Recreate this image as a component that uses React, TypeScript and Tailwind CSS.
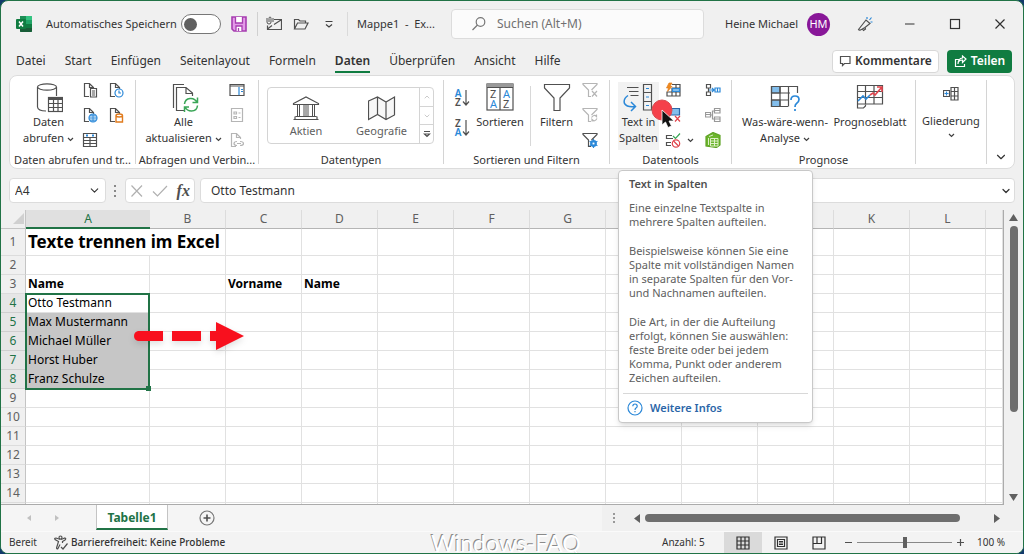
import type { ReactNode } from "react"
import { ChevronDown, ChevronUp } from "lucide-react"

const tabs = ["Datei", "Start", "Einfügen", "Seitenlayout", "Formeln", "Daten", "Überprüfen", "Ansicht", "Hilfe"]
const columns = ["A", "B", "C", "D", "E", "F", "G", "H", "I", "J", "K", "L", ""]
const rows = Array.from({ length: 14 }, (_, i) => i + 1)

const cells: Record<string, string> = {
  A1: "Texte trennen im Excel",
  A3: "Name",
  C3: "Vorname",
  D3: "Name",
  A4: "Otto Testmann",
  A5: "Max Mustermann",
  A6: "Michael Müller",
  A7: "Horst Huber",
  A8: "Franz Schulze",
}

function Svg({ w = 16, h = 16, children }: { w?: number; h?: number; children: ReactNode }) {
  return (
    <svg width={w} height={h} viewBox={`0 0 ${w} ${h}`} fill="none" stroke="#505050" strokeWidth="1.2" className="block shrink-0">
      {children}
    </svg>
  )
}

/* Page outline with a folded corner, shared by several small icons */
function PageIcon({ color = "#505050", children }: { color?: string; children?: ReactNode }) {
  return (
    <Svg>
      <path d="M7 14.500H2.500V1.500H7.500L11.500 5.500V7M7.500 1.500V5.500H11.500" stroke={color} />
      {children}
    </Svg>
  )
}

function ExcelLogo() {
  return (
    <Svg>
      <g stroke="none">
        <rect x="4" y="0" width="12" height="16" rx="1" fill="#21a366" />
        <path d="M4 0H10V4H4Z" fill="#1c8f56" />
        <path d="M10 0H15Q16 0 16 1V4H10Z" fill="#33c481" />
        <path d="M4 8H16V15Q16 16 15 16H5Q4 16 4 15Z" fill="#185c37" />
        <path d="M10 8H16V12H10Z" fill="#107c41" />
        <rect x="0" y="3" width="10" height="10" rx="1" fill="#107c41" />
      </g>
      <path d="M3 5.500L7 10.500M7 5.500L3 10.500" stroke="#fff" strokeWidth="1.500" />
    </Svg>
  )
}

function SaveIcon() {
  return (
    <Svg>
      <path d="M1 1H15V15H3L1 13Z" fill="#e39be8" stroke="#a63cb0" strokeWidth="1.600" />
      <path d="M4.500 1V7H11.500V1" fill="#fff" stroke="#a63cb0" strokeWidth="1.300" />
      <path d="M5 15V10H11V15M7.500 12V15" fill="#fff" stroke="#a63cb0" strokeWidth="1.300" />
    </Svg>
  )
}

function MailIcon() {
  return (
    <Svg>
      <path d="M8 3.500H15.500V13.500H1.500V9.500M8 8.500L15 4M1.500 13L6 9.500" />
      <path d="M1 2V6Q1 8 3 8T5 6V2.500Q5 1 4 1T3 2.500V6M7 2V6" strokeWidth="1" />
    </Svg>
  )
}

function FolderIcon() {
  return (
    <Svg>
      <path d="M1.500 13V3.500H5.500L7 5H12.500V7M1.500 13L4.500 7H15L12 13Z" />
    </Svg>
  )
}

function SearchIcon() {
  return (
    <Svg>
      <circle cx="9.500" cy="6" r="4.300" stroke="#777" />
      <path d="M6.500 9L1.500 14" stroke="#777" />
    </Svg>
  )
}

function PenIcon() {
  return (
    <Svg>
      <path d="M1.500 13.500L9 4L13 7.500L8 11.500L3.500 14Q2 14.500 1.500 13.500ZM5 12.500L6.500 14.500L8.500 13L8 11.500" />
      <path d="M10 3V1M12.500 4L14.500 1.500M13.500 6H15.500" stroke="#2b88d8" />
    </Svg>
  )
}

function DatabaseIcon() {
  return (
    <Svg w={28} h={32}>
      <path d="M2.500 5V25Q3 29 11 29M21.500 5V14" />
      <ellipse cx="12" cy="5" rx="9.500" ry="3.200" />
      <rect x="13.500" y="15.500" width="14" height="14" fill="#fff" />
      <path d="M13.500 16.500H27.500" strokeWidth="3" />
      <path d="M13.500 21.500H27.500M13.500 25.500H27.500M18.500 17V29.500M23 17V29.500" />
    </Svg>
  )
}

function RefreshAllIcon() {
  return (
    <Svg w={30} h={32}>
      <path d="M4.500 26V2.500H15" />
      <path d="M15 28.500H7.500V5.500H17L23.500 11V14M17 5.500V11.500H23.500" />
      <path d="M15.500 22Q16 17 21 16.500Q26 16 28 20.500M28.500 15.500V20.500H23.500M28.500 23.500Q28 29 22.500 29Q18 29 16 25M15.500 30V25H20" stroke="#3aa657" strokeWidth="1.500" />
    </Svg>
  )
}

function BankIcon() {
  return (
    <Svg w={28} h={26}>
      <path d="M1.500 8.500L14 2L26.500 8.500V9.500H1.500ZM3.500 21.500H24.500M1.500 24.500H26.500M3 21.500V24M25 21.500V24" />
      <path d="M5.500 10V21M7.500 10V21M12 10V21M14 10V21M16 10V21M20.500 10V21M22.500 10V21" strokeWidth="1" />
    </Svg>
  )
}

function MapIcon() {
  return (
    <Svg w={28} h={26}>
      <path d="M.500 6L9.500 2L18 7L26.500 2V20L18 24.500L9.500 19.500L.500 24.500ZM9.500 2V19.500M18 7V24.500" fill="#f7f7f7" />
    </Svg>
  )
}

function SortIcon({ first, second }: { first: string; second: string }) {
  return (
    <div className="flex items-center">
      <span className="flex w-2 flex-col text-center text-[10px] leading-[9px] font-semibold">
        <span className={first === "A" ? "text-[#2b88d8]" : "text-[#505050]"}>{first}</span>
        <span className={second === "A" ? "text-[#2b88d8]" : "text-[#505050]"}>{second}</span>
      </span>
      <Svg w={8} h={18}>
        <path d="M4 1V16M1 12.500L4 16L7 12.500" />
      </Svg>
    </div>
  )
}

function SortDialogIcon() {
  return (
    <Svg w={28} h={32}>
      <rect x="1" y="2" width="26" height="26" fill="#fff" />
      <path d="M1 3.500H27" stroke="#999" strokeWidth="3" />
      <path d="M1 5.500H27M14 5.500V28" />
      <g stroke="none" fontFamily="Noto Sans" fontSize="11">
        <text x="4" y="16" fill="#505050">Z</text>
        <text x="4" y="26" fill="#2b88d8">A</text>
        <text x="17" y="16" fill="#2b88d8">A</text>
        <text x="17" y="26" fill="#505050">Z</text>
      </g>
    </Svg>
  )
}

function FilterIcon() {
  return (
    <Svg w={28} h={32}>
      <path d="M1.500 2.500H26.500V6L17 16V28.500H11V16L1.500 6Z" />
    </Svg>
  )
}

function SmallFilter({ color = "#b5b5b5", children }: { color?: string; children: ReactNode }) {
  return (
    <Svg>
      <path d="M9 14.500H6.500V8L1 2.500V1.500H15V2.500L9.500 8" stroke={color} />
      {children}
    </Svg>
  )
}

function TextColumnsIcon() {
  return (
    <Svg w={32} h={32}>
      <path d="M4 5.500H15.500M6 9.500H15.500M7.500 13.500H15.500" />
      <path d="M20.500 2.500H28.500V28H20.500ZM20.500 10.500H28.500M20.500 19.500H28.500" />
      <path d="M23 6.500H26M23 15H26M23 23.500H26" stroke="#2b88d8" />
      <path d="M5 13.500Q0 17 1.500 21.500Q4 25.500 12 24.500M8 20L12.500 24.500L8 29" stroke="#2b88d8" strokeWidth="1.500" />
    </Svg>
  )
}

function WhatIfIcon() {
  return (
    <Svg w={30} h={32}>
      <path d="M1.500 4.500H10V11H1.500ZM1.500 18H10V24.500H1.500Z" fill="#83beec" />
      <path d="M18 24.500H1.500V4.500H27.500V11M1.500 11H20M1.500 18H19M10 4.500V24.500M18.500 4.500V24.500" />
      <path d="M21 18Q21 14 25 14T29 17.500Q29 20 26.500 21.500Q25 22.500 25 25M25 27V29" stroke="#2b88d8" strokeWidth="1.700" />
    </Svg>
  )
}

function ForecastIcon() {
  return (
    <Svg w={28} h={32}>
      <path d="M9.500 22.500V24L7.500 26H1.500V3.500H26.500V22H9.500M1.500 9.500H26.500M1.500 15.500H26.500M1.500 22H9M9.500 3.500V22M18 3.500V22" />
      <path d="M2 19L7 14L10 17L14 13" stroke="#2b88d8" strokeWidth="1.600" />
      <path d="M14 13L17 11L19 13L25.500 5.500M21 5H26V10" stroke="#e0444c" strokeWidth="1.600" />
    </Svg>
  )
}

function Caret() {
  return (
    <svg width="7" height="5" viewBox="0 0 7 5" fill="none" stroke="#404040" strokeWidth="1.2" className="inline-block">
      <path d="M1 1L3.500 3.500L6 1" />
    </svg>
  )
}

function IconButton({ label, children }: { label: string; children: ReactNode }) {
  return (
    <button type="button" aria-label={label} className="flex shrink-0 items-center justify-center">
      {children}
    </button>
  )
}

function BigButton({ className, icon, children }: { className: string; icon: ReactNode; children: ReactNode }) {
  return (
    <button type="button" className={`flex shrink-0 flex-col items-center text-center text-[11px] leading-4 whitespace-nowrap ${className}`}>
      {icon}
      <span>{children}</span>
    </button>
  )
}

function Group({ title, className, children }: { title: string; className: string; children: ReactNode }) {
  return (
    <section className={`relative flex shrink-0 flex-col ${className}`}>
      <div className="flex h-[76px] items-start pt-1.5">{children}</div>
      <h2 className="text-center text-[11px] leading-4 whitespace-nowrap">{title}</h2>
    </section>
  )
}

function Separator() {
  return <div className="my-1 w-px shrink-0 bg-[#d4d4d4]" />
}

function TitleBar() {
  return (
    <header className="flex h-[46px] shrink-0 items-center pl-[15px] text-[11px]">
      <ExcelLogo />
      <label className="ml-3.5 flex w-[175px] items-center justify-between whitespace-nowrap">
        Automatisches Speichern
        <input
          type="checkbox"
          role="switch"
          className="flex h-5 w-10 appearance-none items-center rounded-full border border-[#777] bg-white pl-0.5 before:h-[13px] before:w-[13px] before:rounded-full before:bg-[#606060]"
        />
      </label>
      <div className="ml-2.5 flex items-center">
        <IconButton label="Speichern"><SaveIcon /></IconButton>
        <div className="mr-2 ml-2.5 h-6 w-px bg-[#d0d0d0]" />
        <IconButton label="E-Mail"><MailIcon /></IconButton>
        <div className="ml-[11px]">
          <IconButton label="Öffnen"><FolderIcon /></IconButton>
        </div>
        <div className="ml-3">
          <IconButton label="Symbolleiste anpassen">
            <Svg>
              <path d="M4.500 5.500H11.500M5 8.500L8 11L11 8.500" stroke="#404040" />
            </Svg>
          </IconButton>
        </div>
        <div className="ml-2.5 h-6 w-px bg-[#dadada]" />
      </div>
      <h1 className="ml-[9px] w-[86px] whitespace-pre">Mappe1  -  Ex...</h1>
      <label className="ml-2 flex h-[30px] flex-1 items-center rounded border border-[#dcdcdc] bg-[#fbfbfb] pl-[19px]">
        <SearchIcon />
        <input type="search" aria-label="Suchen" placeholder="Suchen (Alt+M)" className="ml-2.5 min-w-0 flex-1 bg-transparent text-xs outline-none placeholder:text-[#707070]" />
      </label>
      <span className="ml-[21px] w-[74px] whitespace-nowrap">Heine Michael</span>
      <button type="button" className="ml-2 h-[23px] w-[23px] rounded-full bg-[#881798] text-[11px] text-white">HM</button>
      <div className="mr-[15px] ml-[27px] flex items-center gap-[29px]">
        <IconButton label="Neuerungen"><PenIcon /></IconButton>
        <IconButton label="Minimieren">
          <Svg><path d="M3 8H12.500" stroke="#303030" /></Svg>
        </IconButton>
        <IconButton label="Maximieren">
          <Svg><rect x="3.500" y="3.500" width="9" height="9" stroke="#303030" /></Svg>
        </IconButton>
        <IconButton label="Schließen">
          <Svg><path d="M3.500 3.500L12.500 12.500M12.500 3.500L3.500 12.500" stroke="#303030" /></Svg>
        </IconButton>
      </div>
    </header>
  )
}

function TabBar() {
  return (
    <nav className="flex h-7 shrink-0 items-center justify-between pr-[11px] pl-[15px] text-xs">
      <div className="flex gap-[19px]">
        {tabs.map((tab) => (
          <button
            key={tab}
            type="button"
            className={tab === "Daten" ? "border-b-2 border-[#107c41] pt-0.5 leading-5 font-semibold" : "border-b-2 border-transparent pt-0.5 leading-5"}
          >
            {tab}
          </button>
        ))}
      </div>
      <div className="flex gap-2 font-semibold">
        <button type="button" className="flex h-[23px] w-[107px] items-center justify-center gap-1 rounded border border-[#d8d8d8] bg-white">
          <Svg w={12} h={12}>
            <path d="M1.500 1.500H11V8.500H5.500L3.500 10.500V8.500H1.500Z" />
          </Svg>
          Kommentare
        </button>
        <button type="button" className="flex h-[23px] w-[65px] items-center justify-center gap-1 rounded bg-[#107c41] text-white">
          <Svg w={13} h={13}>
            <path d="M5 4.500H1.500V11.500H10.500V9M4 9Q4 5 8.500 5V7.500L12 4L8.500 1V3Q4 3.500 4 9Z" stroke="#fff" />
          </Svg>
          Teilen
        </button>
      </div>
    </nav>
  )
}

function Tooltip() {
  return (
    <div role="tooltip" className="absolute top-[88px] left-0 z-20 w-[195px] rounded border border-[#c8c8c8] bg-white text-[11px] leading-[14px] whitespace-nowrap text-[#606060] shadow-md">
      <div className="flex flex-col px-2.5 pt-1.5 pb-2">
        <strong className="mb-2.5 font-semibold text-[#505050]">Text in Spalten</strong>
        <p>
          Eine einzelne Textspalte in<br />
          mehrere Spalten aufteilen.
        </p>
        <p className="mt-[15px]">
          Beispielsweise können Sie eine<br />
          Spalte mit vollständigen Namen<br />
          in separate Spalten für den Vor-<br />
          und Nachnamen aufteilen.
        </p>
        <p className="mt-[15px]">
          Die Art, in der die Aufteilung<br />
          erfolgt, können Sie auswählen:<br />
          feste Breite oder bei jedem<br />
          Komma, Punkt oder anderem<br />
          Zeichen aufteilen.
        </p>
      </div>
      <a href="#hilfe" className="mx-1 flex h-[29px] items-center gap-[7px] border-t border-[#d8d8d8] pl-1 font-semibold text-[#2b66a8]">
        <Svg>
          <circle cx="8" cy="8" r="7" stroke="#2b88d8" />
          <path d="M5.800 6.300Q5.800 4 8 4T10.200 6.200Q10.200 7.300 9 8Q8 8.700 8 10M8 11V12.300" stroke="#2b88d8" />
        </Svg>
        Weitere Infos
      </a>
    </div>
  )
}

function Ribbon() {
  return (
    <div className="mx-2 flex h-[94px] shrink-0 rounded-lg border border-[#dcdcdc] bg-white">
      <Group title="Daten abrufen und tr..." className="w-[125px]">
        <BigButton className="ml-2.5 w-[57px]" icon={<DatabaseIcon />}>
          Daten<br />abrufen <Caret />
        </BigButton>
        <div className="ml-[5px] grid grid-cols-2 gap-x-2.5 gap-y-[9px]">
          <IconButton label="Aus Text/CSV">
            <PageIcon>
              <path d="M8.500 6.500H14.500V15H8.500ZM10 9H13M10 11H13M10 13H13" fill="#fff" />
            </PageIcon>
          </IconButton>
          <IconButton label="Zuletzt verwendete Quellen">
            <PageIcon>
              <circle cx="11" cy="11" r="4" fill="#fff" stroke="#2b88d8" />
              <path d="M11 8.500V11H13" stroke="#2b88d8" />
            </PageIcon>
          </IconButton>
          <IconButton label="Aus dem Web">
            <PageIcon>
              <circle cx="11" cy="11" r="4" fill="#d5eaf9" stroke="#2b88d8" />
              <path d="M7 11H15M11 7V15M8 8.800H14M8 13.200H14" stroke="#2b88d8" strokeWidth="0.900" />
            </PageIcon>
          </IconButton>
          <IconButton label="Vorhandene Verbindungen">
            <PageIcon>
              <path d="M8 8.500V15H14.500V8.500Q14.500 7 11.250 7T8 8.500Q8 10 11.250 10T14.500 8.500" fill="#fff" stroke="#e07b1e" strokeWidth="1.400" />
            </PageIcon>
          </IconButton>
          <IconButton label="Aus Tabelle/Bereich">
            <Svg>
              <path d="M1.500 1.500H14.500V14.500H1.500ZM1.500 5.500H14.500M1.500 8.500H14.500M1.500 11.500H14.500M8 5.500V14.500" />
              <path d="M4 3.500H6M10 3.500H12" stroke="#2b88d8" strokeWidth="2" />
            </Svg>
          </IconButton>
        </div>
      </Group>
      <Separator />

      <Group title="Abfragen und Verbin..." className="w-[122px]">
        <BigButton className="ml-2 w-[79px]" icon={<RefreshAllIcon />}>
          Alle<br />aktualisieren <Caret />
        </BigButton>
        <div className="ml-1.5 flex flex-col gap-[9px]">
          <IconButton label="Abfragen und Verbindungen">
            <Svg>
              <path d="M1 2.500H15V13.500H1ZM1 4H15" />
              <path d="M10 5V13M12 7.500H14M12 9.500H14" stroke="#2b88d8" />
            </Svg>
          </IconButton>
          <IconButton label="Eigenschaften">
            <Svg>
              <path d="M2.500 1.500H13.500V14.500H2.500ZM5 5H7.500V7H5ZM5 9.500H7.500V11.500H5ZM9.500 6H11.500M9.500 10.500H11.500" stroke="#b5b5b5" />
            </Svg>
          </IconButton>
          <IconButton label="Verknüpfungen bearbeiten">
            <PageIcon color="#b5b5b5">
              <path d="M8 13.500Q5 13.500 5 11.500T8 9.500M11 9.500Q14.500 9.500 14.500 11.500T11 13.500M8 11.500H12" stroke="#b5b5b5" />
            </PageIcon>
          </IconButton>
        </div>
      </Group>
      <Separator />

      <Group title="Datentypen" className="w-[184px]">
        <div className="mt-[5px] ml-2 flex h-[57px] w-[167px] rounded border border-[#d4d4d4] text-[11px] leading-4 text-[#606060]">
          <button type="button" className="flex w-[76px] flex-col items-center pt-[7px]">
            <BankIcon />
            <span className="pt-0.5">Aktien</span>
          </button>
          <button type="button" className="flex flex-1 flex-col items-center pt-[7px]">
            <MapIcon />
            <span className="pt-0.5">Geografie</span>
          </button>
          <div className="flex w-[14px] flex-col divide-y divide-[#d4d4d4] border-l border-[#d4d4d4]">
            <button type="button" aria-label="Nach oben" className="flex flex-1 items-center justify-center text-[#b0b0b0]"><ChevronUp size={8} /></button>
            <button type="button" aria-label="Nach unten" className="flex flex-1 items-center justify-center text-[#b0b0b0]"><ChevronDown size={8} /></button>
            <button type="button" aria-label="Mehr" className="flex flex-1 items-center justify-center">
              <Svg w={8} h={8}><path d="M1 1.500H7M1.500 4L4 6.500L6.500 4Z" /></Svg>
            </button>
          </div>
        </div>
      </Group>
      <Separator />

      <Group title="Sortieren und Filtern" className="w-[165px]">
        <div className="mt-[7px] ml-2.5 flex flex-col gap-3">
          <IconButton label="Aufsteigend sortieren"><SortIcon first="A" second="Z" /></IconButton>
          <IconButton label="Absteigend sortieren"><SortIcon first="Z" second="A" /></IconButton>
        </div>
        <BigButton className="ml-1 w-[52px]" icon={<SortDialogIcon />}>Sortieren</BigButton>
        <div className="mt-1 ml-1 h-[60px] w-px bg-[#d8d8d8]" />
        <BigButton className="ml-1 w-[43px]" icon={<FilterIcon />}>Filtern</BigButton>
        <div className="ml-1 flex flex-col gap-[9px]">
          <IconButton label="Löschen">
            <SmallFilter><path d="M10 9L15 14.500M15 9L10 14.500" stroke="#b5b5b5" /></SmallFilter>
          </IconButton>
          <IconButton label="Erneut anwenden">
            <SmallFilter><path d="M9.500 10.500Q12 7 14.500 9.500V7.500M15 11.500Q12.500 15.500 10 12.500V14.500" stroke="#b5b5b5" /></SmallFilter>
          </IconButton>
          <IconButton label="Erweitert">
            <SmallFilter color="#505050">
              <circle cx="11.500" cy="11.500" r="2.500" stroke="#2b88d8" strokeWidth="1.800" />
              <path d="M11.500 7V16M7.600 9.200L15.400 13.800M15.400 9.200L7.600 13.800" stroke="#2b88d8" />
              <circle cx="11.500" cy="11.500" r="1" fill="#fff" stroke="none" />
            </SmallFilter>
          </IconButton>
        </div>
      </Group>
      <Separator />

      <Group title="Datentools" className="w-[121px]">
        <div className="relative ml-2 h-[68px] w-[41px] bg-[#f2f2f2]">
          <BigButton className="w-[41px]" icon={<TextColumnsIcon />}>
            Text in<br />Spalten
          </BigButton>
          <Tooltip />
          {/* Click marker with the mouse pointer */}
          <svg width="34" height="34" viewBox="0 0 34 34" className="pointer-events-none absolute top-4 left-8 z-30">
            <circle cx="12" cy="12" r="10" fill="#f5404a" stroke="#d84a50" />
            <path d="M12 12V27L15.500 24L18 29.500L21.500 28L19 23H24Z" fill="#111" stroke="#fff" strokeWidth="0.800" />
          </svg>
        </div>
        <div className="ml-1.5 flex flex-col gap-[9px]">
          <IconButton label="Blitzvorschau">
            <Svg>
              <path d="M7 2.500H15V14H2V9.500M2 10H15M7 6H15M7 6V14M11 2.500V14" />
              <path d="M7.500 6.500H14.500V9.500H7.500Z" fill="#83beec" stroke="#2b88d8" />
              <path d="M4 1H7L5 4.500H7L2.500 9.500L3.500 6H1.500Z" fill="#f08a1d" stroke="#e07b1e" strokeWidth="0.700" />
            </Svg>
          </IconButton>
          <IconButton label="Duplikate entfernen">
            <Svg>
              <path d="M3 1.500H14.500V8H3Z" fill="#83beec" stroke="#2b66a8" />
              <path d="M10 9L15 14.500M15 9L10 14.500" stroke="#e0444c" />
            </Svg>
          </IconButton>
          <IconButton label="Datenüberprüfung">
            <Svg>
              <path d="M7 3.500H1.500V6.500H8M6 10.500H1.500V13.500H6" />
              <path d="M8 4L10.500 6.500L15 1.500" stroke="#3aa657" />
              <circle cx="11" cy="11.500" r="3.700" stroke="#e0444c" />
              <path d="M8.500 9L13.500 14" stroke="#e0444c" />
            </Svg>
          </IconButton>
        </div>
        <div className="mt-[52px] ml-1.5 flex h-3 items-center"><Caret /></div>
        <div className="ml-[11px] flex flex-col gap-[9px]">
          <IconButton label="Konsolidieren">
            <Svg>
              <path d="M1.500 2.500H5.500V6H1.500ZM1.500 10H5.500V13.500H1.500ZM3.500 6V10" />
              <path d="M4 8H9M7 6L9 8L7 10M10 6H15V10H10ZM12.500 6V10" stroke="#2b88d8" />
            </Svg>
          </IconButton>
          <IconButton label="Beziehungen">
            <Svg>
              <path d="M.500 5.500H5.500V10H.500ZM9.500 1.500H15V6H9.500ZM9.500 10H15V14.500H9.500ZM5.500 8H7.500M9.500 4H7.500V12H9.500M9.500 3.500H15M9.500 12H15M.500 7.500H5" stroke="#999" />
            </Svg>
          </IconButton>
          <IconButton label="Datenmodell verwalten">
            <Svg>
              <path d="M1 4.500L8 .500L15 3.500V13L11.500 15.500L1 14Z" fill="#6cb52d" stroke="#5fa325" />
              <path d="M5.500 14V6.500H13V14ZM5.500 9H13M5.500 11.500H13M9.500 6.500V14M3.500 6V13M4 4.500L8 3" stroke="#e9f5d8" strokeWidth="0.900" />
            </Svg>
          </IconButton>
        </div>
      </Group>
      <Separator />

      <Group title="Prognose" className="w-[183px]">
        <BigButton className="ml-2 w-[90px]" icon={<WhatIfIcon />}>
          Was-wäre-wenn-<br />Analyse <Caret />
        </BigButton>
        <BigButton className="ml-[3px] w-[74px]" icon={<ForecastIcon />}>Prognoseblatt</BigButton>
      </Group>
      <Separator />

      <button type="button" className="flex w-[70px] shrink-0 flex-col items-center self-start pt-2.5 text-[11px] leading-4">
        <Svg>
          <path d="M8 1.500H15V14H8ZM8 5.500H15M8 10H15M11.500 1.500V14" />
          <path d="M.500 4.500H6.500V10.500H.500Z" />
          <path d="M3.500 5.500V9.500M1.500 7.500H5.500" stroke="#2b88d8" />
        </Svg>
        <span className="pt-[11px] pb-1">Gliederung</span>
        <Caret />
      </button>
      <Separator />
      <div className="flex flex-1 items-end justify-center pb-1">
        <IconButton label="Menüband reduzieren">
          <ChevronDown size={14} strokeWidth={2} />
        </IconButton>
      </div>
    </div>
  )
}

function FormulaBar() {
  return (
    <div className="mt-[9px] mb-[7px] flex h-[25px] shrink-0 items-stretch px-2 text-xs">
      <label className="flex w-[97px] items-center justify-between rounded border border-[#dcdcdc] bg-white pr-1 pl-[5px]">
        <input type="text" aria-label="Namenfeld" defaultValue="A4" className="w-12 outline-none" />
        <ChevronDown size={13} />
      </label>
      <div className="mx-2 flex items-center">
        <svg width="3" height="12" viewBox="0 0 3 12" fill="#888">
          <path d="M0 0H2V2H0ZM0 5H2V7H0ZM0 10H2V12H0Z" />
        </svg>
      </div>
      <div className="flex w-[70px] items-center justify-around rounded border border-[#dcdcdc] bg-white">
        <IconButton label="Abbrechen">
          <Svg w={14} h={14}><path d="M1.500 1.500L12 12.500M12 1.500L1.500 12.500" stroke="#b0b0b0" /></Svg>
        </IconButton>
        <IconButton label="Eingeben">
          <Svg><path d="M1 8.500L5.500 13L15 3" stroke="#b0b0b0" /></Svg>
        </IconButton>
        <button type="button" aria-label="Funktion einfügen" className="font-['Liberation_Serif',serif] text-base leading-5 font-bold text-[#505050] italic">fx</button>
      </div>
      <label className="ml-[5px] flex flex-1 items-center rounded border border-[#dcdcdc] bg-white pr-0.5 pl-2.5">
        <input type="text" aria-label="Bearbeitungsleiste" defaultValue="Otto Testmann" className="min-w-0 flex-1 outline-none" />
        <ChevronDown size={12} strokeWidth={2.5} />
      </label>
    </div>
  )
}

function Cell({ col, row }: { col: string; row: number }) {
  const text = cells[col + row]
  if (row === 1 && col === "B") return null
  if (row === 1 && col === "A") {
    return (
      <td colSpan={2} className="border-r border-b border-[#e1e1e1] pl-0.5 text-[17px] leading-[26px] font-bold whitespace-nowrap">
        {text}
      </td>
    )
  }
  const selected = col === "A" && row > 4 && row < 9
  const bold = row === 3 ? "font-bold" : ""
  return (
    <td className={`relative border-r border-b pl-0.5 whitespace-nowrap ${bold} ${selected ? "border-[#c6c6c6] bg-[#c6c6c6]" : "border-[#e1e1e1]"}`}>
      {text}
      {col === "A" && row === 4 && (
        <div className="pointer-events-none absolute -top-px -left-px z-10 h-[97px] w-[125px] border-2 border-[#217346]">
          <div className="absolute -right-[3px] -bottom-[3px] h-[5px] w-[5px] bg-[#217346]" />
        </div>
      )}
      {col === "A" && row === 6 && (
        <svg width="116" height="34" viewBox="0 0 116 34" className="pointer-events-none absolute -top-3 left-[106px] z-10 drop-shadow-md">
          <path d="M6 11H31V21H6Q2 20 2 16T6 11ZM40 11H69V21H40ZM78 11H84V2L112 16L84 30V21H78Z" fill="#f8101e" />
        </svg>
      )}
    </td>
  )
}

function Sheet() {
  return (
    <div className="flex min-h-0 flex-1">
      <div className="flex-1 overflow-hidden border-r border-b border-[#ababab] bg-white">
        <table className="w-full table-fixed border-separate border-spacing-0 text-xs leading-[18px] text-black">
          <colgroup>
            <col className="w-[25px]" />
            <col className="w-[124px]" />
            {columns.slice(1, -1).map((c) => (
              <col key={c} className="w-[76px]" />
            ))}
            <col />
          </colgroup>
          <thead>
            <tr className="h-[19px] text-[#606060]">
              <td className="border-r border-b border-[#c4c4c4] bg-[#f0f0f0]">
                <svg width="12" height="12" viewBox="0 0 12 12" fill="#d0d0d0" className="ml-auto block">
                  <path d="M11 0V11H0Z" />
                </svg>
              </td>
              {columns.map((c) => (
                <th
                  key={c}
                  scope="col"
                  className={
                    c === "A"
                      ? "border-b-2 border-[#217346] bg-[#e0e0e0] leading-[17px] font-normal text-[#217346]"
                      : "border-r border-b border-r-[#dcdcdc] border-b-[#b5b5b5] bg-[#f0f0f0] font-normal"
                  }
                >
                  {c}
                </th>
              ))}
            </tr>
          </thead>
          <tbody>
            {rows.map((r) => (
              <tr key={r} className={r === 1 ? "h-[27px]" : "h-[19px]"}>
                <th
                  scope="row"
                  className={
                    r > 3 && r < 9
                      ? "border-r border-b border-r-[#217346] border-b-[#cfcfcf] bg-[#e6e6e6] font-normal text-[#217346]"
                      : "border-r border-b border-r-[#c4c4c4] border-b-[#dcdcdc] bg-[#f0f0f0] font-normal text-[#606060]"
                  }
                >
                  {r}
                </th>
                {columns.map((c) => (
                  <Cell key={c} col={c} row={r} />
                ))}
              </tr>
            ))}
            <tr className="h-[19px]">
              <td className="border-r border-[#c4c4c4] bg-[#f0f0f0]" />
              {columns.map((c) => (
                <td key={c} className="border-r border-[#e1e1e1]" />
              ))}
            </tr>
          </tbody>
        </table>
      </div>
      <div className="flex w-[19px] shrink-0 flex-col items-center pt-0.5 pb-0.5">
        <IconButton label="Bildlauf nach oben">
          <svg width="9" height="12" viewBox="0 0 9 12" fill="#606060"><path d="M4.500 2L9 9H0Z" /></svg>
        </IconButton>
        <div className="mt-0.5 flex w-2 flex-1 flex-col">
          <div className="h-[70%] rounded-full bg-[#6e6e6e]" />
        </div>
        <IconButton label="Bildlauf nach unten">
          <svg width="9" height="12" viewBox="0 0 9 12" fill="#606060"><path d="M4.500 10L9 3H0Z" /></svg>
        </IconButton>
      </div>
    </div>
  )
}

function SheetTabs() {
  return (
    <div className="flex h-[26px] shrink-0 items-center bg-[#f5f5f5]">
      <div className="ml-6 flex gap-5">
        <IconButton label="Vorheriges Blatt">
          <svg width="8" height="8" viewBox="0 0 8 8" fill="#c0c0c0"><path d="M6 1V7L2 4Z" /></svg>
        </IconButton>
        <IconButton label="Nächstes Blatt">
          <svg width="8" height="8" viewBox="0 0 8 8" fill="#c0c0c0"><path d="M2 1V7L6 4Z" /></svg>
        </IconButton>
      </div>
      <button type="button" className="ml-[35px] h-[25px] w-[72px] self-start border-x border-b-2 border-x-[#c4c4c4] border-b-[#217346] bg-white pt-0.5 text-xs font-bold text-[#217346]">
        Tabelle1
      </button>
      <div className="ml-[31px]">
        <IconButton label="Neues Blatt">
          <Svg>
            <circle cx="8" cy="8" r="7" stroke="#777" />
            <path d="M4.500 8H11.500M8 4.500V11.500" strokeWidth="1.600" />
          </Svg>
        </IconButton>
      </div>
      <div className="ml-auto flex h-full w-[421px] items-center bg-[#f0f0f0] pl-[11px]">
        <svg width="3" height="10" viewBox="0 0 3 10" fill="#999">
          <path d="M0 0H2V2H0ZM0 4H2V6H0ZM0 8H2V10H0Z" />
        </svg>
        <div className="ml-[17px]">
          <IconButton label="Bildlauf nach links">
            <svg width="8" height="9" viewBox="0 0 8 9" fill="#606060"><path d="M7 0V9L1 4.500Z" /></svg>
          </IconButton>
        </div>
        <div className="ml-1 h-2 w-[315px] rounded-full bg-[#6e6e6e]" />
        <div className="ml-[33px]">
          <IconButton label="Bildlauf nach rechts">
            <svg width="8" height="9" viewBox="0 0 8 9" fill="#606060"><path d="M1 0V9L7 4.500Z" /></svg>
          </IconButton>
        </div>
      </div>
    </div>
  )
}

function StatusBar() {
  return (
    <footer className="relative flex h-[22px] shrink-0 items-stretch overflow-hidden border-t border-[#fafafa] bg-[#f3f3f3] text-[10px]">
      <span className="flex w-[52px] items-center pl-2">Bereit</span>
      <button type="button" className="flex items-center gap-0.5 font-medium whitespace-nowrap">
        <Svg>
          <path d="M7.500 4.500L3 3Q1 3 2 4.500L5.500 6.500L3.500 13Q4 14.500 5 13.500L7 9.500M8 4.500L12 3Q13.500 3.500 12 5L9.500 6.500V8M8 12L10 14L14.500 8.500" />
          <circle cx="7.500" cy="2.500" r="1.500" />
        </Svg>
        Barrierefreiheit: Keine Probleme
      </button>
      <span className="ml-auto flex w-[62px] items-center">Anzahl: 5</span>
      <div className="flex">
        <button type="button" aria-label="Normal" className="flex w-[38px] items-center justify-center bg-[#dadada]">
          <Svg w={14} h={14}><path d="M1 1H13V13H1ZM1 5H13M1 9H13M5 1V13M9 1V13" stroke="#303030" /></Svg>
        </button>
        <button type="button" aria-label="Seitenlayoutansicht" className="flex w-[38px] items-center justify-center">
          <Svg w={14} h={14}><path d="M1 1H13V13H1ZM3.500 3.500H10.500V10.500H3.500ZM5 5.500H9M5 7H9M5 8.500H9" stroke="#303030" /></Svg>
        </button>
        <button type="button" aria-label="Umbruchvorschau" className="flex w-[38px] items-center justify-center">
          <Svg w={14} h={14}><path d="M1 1H13V13H1ZM1 7.500H9.500V1M5 1V7.500" stroke="#303030" /></Svg>
        </button>
      </div>
      <div className="mr-[18px] ml-1.5 flex items-center">
        <IconButton label="Verkleinern">
          <Svg w={9} h={9}><path d="M1 4.500H8" /></Svg>
        </IconButton>
        <input
          type="range"
          aria-label="Zoom"
          defaultValue={50}
          className="mx-1 h-px w-[95px] appearance-none bg-[#888] [&::-webkit-slider-thumb]:h-[11px] [&::-webkit-slider-thumb]:w-1 [&::-webkit-slider-thumb]:appearance-none [&::-webkit-slider-thumb]:bg-[#606060]"
        />
        <IconButton label="Vergrößern">
          <Svg w={9} h={9}><path d="M1 4.500H8M4.500 1V8" /></Svg>
        </IconButton>
        <span className="ml-3 w-7 text-right whitespace-nowrap">100 %</span>
      </div>
      <span className="pointer-events-none absolute top-0 left-[430px] font-['Lato',sans-serif] text-[23px] leading-[22px] whitespace-nowrap text-white [text-shadow:-1px_-1px_0_#8a8a8a]">
        Windows-FAQ
      </span>
    </footer>
  )
}

export default function App() {
  return (
    <div className="h-screen bg-[#123a6b] font-['Noto_Sans','Open_Sans',sans-serif] text-[#333]">
      <main className="flex h-full flex-col overflow-hidden rounded-lg border border-[#217346] bg-[#f0f0f0]">
        <TitleBar />
        <TabBar />
        <Ribbon />
        <FormulaBar />
        <Sheet />
        <SheetTabs />
        <StatusBar />
      </main>
    </div>
  )
}
